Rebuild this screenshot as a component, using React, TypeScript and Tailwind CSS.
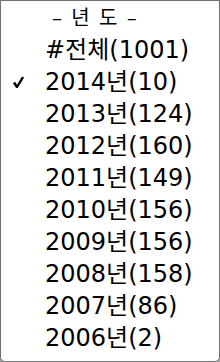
import React from "react";

const years = [
  { label: "#전체(1001)", checked: false },
  { label: "2014년(10)", checked: true },
  { label: "2013년(124)", checked: false },
  { label: "2012년(160)", checked: false },
  { label: "2011년(149)", checked: false },
  { label: "2010년(156)", checked: false },
  { label: "2009년(156)", checked: false },
  { label: "2008년(158)", checked: false },
  { label: "2007년(86)", checked: false },
  { label: "2006년(2)", checked: false },
];

function Check() {
  return (
    <svg width="11" height="12" viewBox="0 0 11 12" className="block">
      <path d="M1 6.5 L4 11 L10 1" fill="none" stroke="#000" strokeWidth="2.4" strokeLinejoin="round" />
    </svg>
  );
}

export default function App() {
  return (
    <div className="w-[220px] h-[362px] bg-[#9a9a9a]">
      <div
        className="w-full h-full bg-white border border-[#707070] rounded-b-[5px] text-black text-[24px] leading-none"
        style={{ fontFamily: '"DejaVu Sans", "Noto Sans CJK KR", sans-serif' }}
      >
        <div className="h-[33px] flex items-center pl-[51px] text-[20px] [word-spacing:3px]">– 년 도 –</div>
        {years.map(y => (
          <div key={y.label} className="h-[32px] flex items-center">
            <div className="w-[44px] flex justify-end pr-[21px]">{y.checked && <Check />}</div>
            <span>{y.label}</span>
          </div>
        ))}
      </div>
    </div>
  );
}
